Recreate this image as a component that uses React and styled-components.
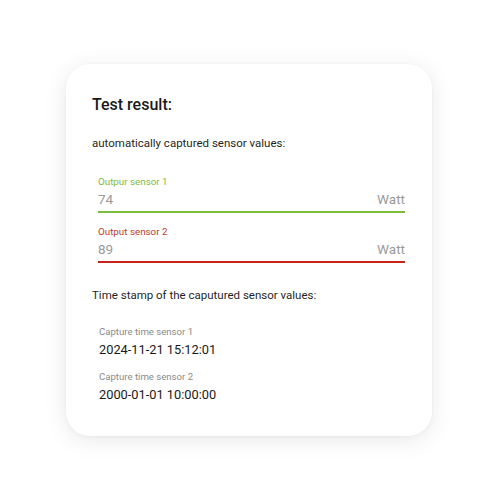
import React from 'react'
import styled, { createGlobalStyle } from 'styled-components'

const GlobalStyle = createGlobalStyle`
  html, body {
    margin: 0;
    padding: 0;
    background: #ffffff;
    font-family: Roboto, "Liberation Sans", sans-serif;
  }
`

const Page = styled.div`
  width: 500px;
  height: 500px;
  padding: 64px 0 0 66px;
  box-sizing: border-box;
`

const Card = styled.div`
  width: 366px;
  height: 372px;
  box-sizing: border-box;
  background: #fff;
  border-radius: 24px;
  box-shadow: 0 4px 24px rgba(0, 0, 0, 0.09), 0 1px 4px rgba(0, 0, 0, 0.04);
  padding: 31px 27px 0 26px;
`

const Title = styled.h2`
  margin: 0;
  font-size: 16px;
  font-weight: 500;
  color: #1a1a1a;
  line-height: 20px;
`

const Section = styled.p`
  margin: ${p => p.top}px 0 0;
  font-size: 11.5px;
  color: #1f1f1f;
  line-height: 16px;
`

const Field = styled.div`
  margin: ${p => p.top}px 0 0 6px;
  border-bottom: 2px solid ${p => p.color};
  padding-bottom: 3px;
`

const FieldLabel = styled.div`
  font-size: 9.8px;
  line-height: 13px;
  color: ${p => p.color};
`

const FieldRow = styled.div`
  display: flex;
  justify-content: space-between;
  margin-top: 3px;
  font-size: 13.5px;
  line-height: 17px;
  color: #9a9a9a;
`

const Stamp = styled.div`
  margin: ${p => p.top}px 0 0 7px;
`

const StampLabel = styled.div`
  font-size: 9.6px;
  line-height: 13px;
  color: #8a8a8a;
`

const StampValue = styled.div`
  margin-top: 3px;
  font-size: 12.8px;
  line-height: 17px;
  color: #1a1a1a;
`

const sensors = [
  { label: 'Outpur sensor 1', value: '74', color: '#7cbd3e', labelColor: '#7cbd3e' },
  { label: 'Output sensor 2', value: '89', color: '#c8231b', labelColor: '#c0392b' },
]

const stamps = [
  { label: 'Capture time sensor 1', value: '2024-11-21 15:12:01' },
  { label: 'Capture time sensor 2', value: '2000-01-01 10:00:00' },
]

const App = () => {
  return (
    <Page>
      <GlobalStyle />
      <Card>
        <Title>Test result:</Title>
        <Section top={20}>automatically captured sensor values:</Section>
        {sensors.map((s, i) => (
          <Field key={s.label} color={s.color} top={i === 0 ? 24 : 12}>
            <FieldLabel color={s.labelColor}>{s.label}</FieldLabel>
            <FieldRow>
              <span>{s.value}</span>
              <span>Watt</span>
            </FieldRow>
          </Field>
        ))}
        <Section top={24}>Time stamp of the caputured sensor values:</Section>
        {stamps.map((s, i) => (
          <Stamp key={s.label} top={i === 0 ? 22 : 12}>
            <StampLabel>{s.label}</StampLabel>
            <StampValue>{s.value}</StampValue>
          </Stamp>
        ))}
      </Card>
    </Page>
  )
}

export default App
